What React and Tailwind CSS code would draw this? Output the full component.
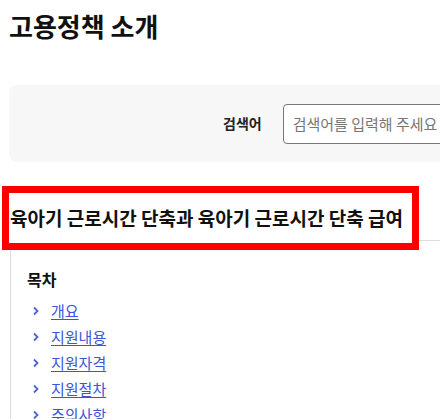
import React from 'react';

const tocItems = ['개요', '지원내용', '지원자격', '지원절차', '주의사항'];

const Chevron = () => (
  <svg width="8" height="10" viewBox="0 0 8 10" className="shrink-0">
    <path d="M2 1.5 L5.5 5 L2 8.5" fill="none" stroke="#4f63d6" strokeWidth="1.8" />
  </svg>
);

const App = () => {
  return (
    <div className="w-[440px] h-[419px] overflow-hidden bg-white" style={{ fontFamily: '"Noto Sans CJK KR", "Noto Sans", sans-serif' }}>
      <div className="w-[760px] pl-[9px]">
        <h2 className="pt-[8px] text-[26px] leading-[35px] font-bold text-[#111]">고용정책 소개</h2>

        {/* search panel */}
        <div className="mt-[42px] h-[77px] rounded-lg bg-[#f7f7f7] flex items-center pl-[214px]">
          <span className="text-[14px] font-bold text-[#222]">검색어</span>
          <input
            className="ml-[21px] w-[320px] h-[40px] rounded border border-[#777] bg-white px-[9px] text-[15px] text-[#333] placeholder:text-[#777] outline-none"
            placeholder="검색어를 입력해 주세요"
          />
        </div>

        {/* highlighted title */}
        <h3 className="relative z-10 mt-[31px] -mb-[3px] w-fit pl-px pr-[9px] h-[50px] flex items-center bg-white text-[19px] font-semibold text-[#111] outline-[7px] outline-solid outline-[#ff0000]">
          육아기 근로시간 단축과 육아기 근로시간 단축 급여
        </h3>

        {/* table of contents */}
        <div className="ml-px rounded-tl-sm border-l border-t border-[#dcdcdc] pl-4 pt-[26px]">
          <p className="text-[16px] leading-[24px] font-bold text-[#111]">목차</p>
          <ul className="mt-[7px] flex flex-col">
            {tocItems.map((item) => (
              <li key={item} className="flex items-center h-[26px] pl-[5px] gap-[11px]">
                <Chevron />
                <a href="#" className="text-[15px] text-[#3a55d6] underline underline-offset-2">{item}</a>
              </li>
            ))}
          </ul>
        </div>
      </div>
    </div>
  );
};

export default App;
